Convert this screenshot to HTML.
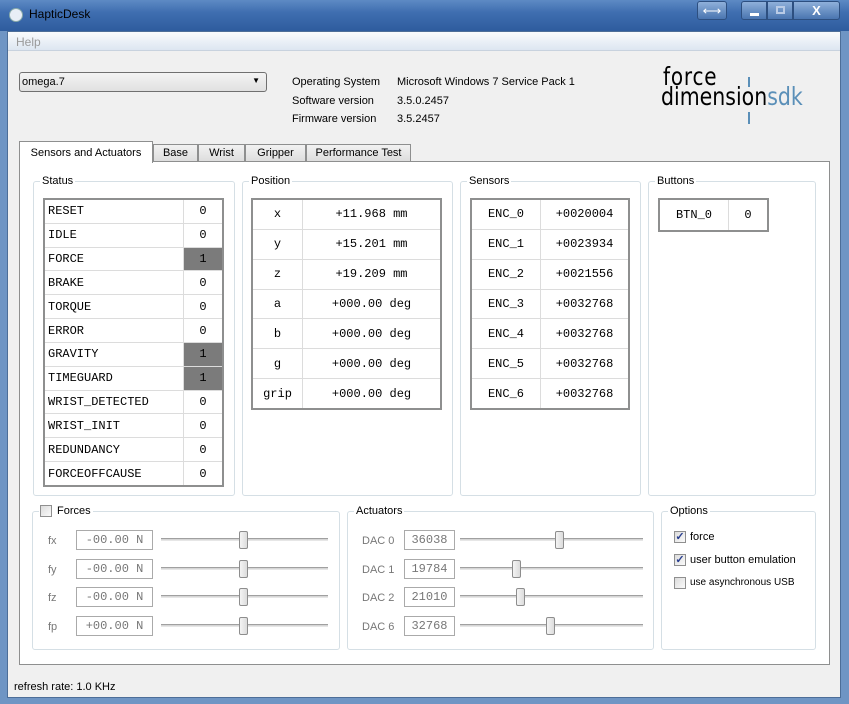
<!DOCTYPE html>
<html><head><meta charset="utf-8"><style>
*{box-sizing:border-box;margin:0;padding:0}
body{width:849px;height:704px;overflow:hidden;position:relative;background:#6f95c4;font-family:"Liberation Sans",sans-serif;font-size:11px;color:#000}
.a{position:absolute}
.title{left:0;top:0;width:849px;height:31px;background:linear-gradient(180deg,#5d8ac4 0%,#3f6eb0 40%,#2e5c9e 100%)}
.client{left:7px;top:31px;width:834px;height:667px;background:#f0f0f0;border:1px solid #4d6e98}
.menu{left:8px;top:32px;width:832px;height:19px;background:linear-gradient(#f9fbfd,#dde6f1);border-bottom:1px solid #c8d2de;color:#9a9a9a;font-size:12px;padding:3px 0 0 8px}
.gb{position:absolute;border:1px solid #d5dfe5;border-radius:3px}
.gt{position:absolute;top:-7px;left:6px;background:#fff;padding:0 2px;font-size:11px}
table{border-collapse:collapse;position:absolute;font-family:"Liberation Mono",monospace;font-size:12px;background:#fff;outline:2px solid #8e8f8f;outline-offset:-1px}
td{border:1px solid #dcdcdc;padding:0}
.ed{position:absolute;width:77px;height:20px;border:1px solid #aaa;background:#fff;font-family:"Liberation Mono",monospace;font-size:12px;color:#777;text-align:center;line-height:18px}
.sl{position:absolute;height:3px;border-top:1px solid #a0a0a0;border-bottom:1px solid #e6e6e6;background:#d6d6d6}
.th{position:absolute;width:9px;height:18px;border:1px solid #8d8d8d;border-radius:2px;background:linear-gradient(90deg,#f4f4f4,#dcdcdc)}
.lb{position:absolute;color:#777;font-size:11px}
.cb{position:absolute;width:12px;height:12px;border:1px solid #8f8f8f;background:linear-gradient(135deg,#dcdcdc,#fafafa)}
.ck{color:#2a3f8f;font-size:11px;line-height:10px;text-align:center;font-weight:bold}
.tab{position:absolute;top:144px;height:18px;border:1px solid #8e8f8f;border-bottom:none;background:linear-gradient(#f2f2f2,#dcdcdc);font-size:11px;text-align:center;line-height:17px}
</style></head><body>
<div class="a title"></div>
<div class="a" style="left:9px;top:8px;width:14px;height:14px;border-radius:50%;background:#e8eef6;border:1px solid #8aa"></div>
<div class="a" style="left:29px;top:7px;font-size:12px;color:#000">HapticDesk</div>
<div class="a" style="left:697px;top:1px;width:30px;height:19px;border:1px solid #2d4f80;border-radius:3px;background:linear-gradient(#8fb0da,#4a75b0);color:#fff;text-align:center;font-size:13px;line-height:17px">⟷</div>
<div class="a" style="left:741px;top:1px;width:26px;height:19px;border:1px solid #2d4f80;border-radius:3px 0 0 3px;background:linear-gradient(#8fb0da,#4a75b0)"><div class="a" style="left:8px;top:11px;width:9px;height:3px;background:#fff"></div></div>
<div class="a" style="left:767px;top:1px;width:26px;height:19px;border:1px solid #2d4f80;background:linear-gradient(#8fb0da,#4a75b0)"><div class="a" style="left:8px;top:4px;width:9px;height:8px;border:2px solid #b9cbe6"></div></div>
<div class="a" style="left:793px;top:1px;width:47px;height:19px;border:1px solid #2d4f80;border-radius:0 3px 3px 0;background:linear-gradient(#8fb0da,#4a75b0);color:#fff;text-align:center;font-weight:bold;font-size:13px;line-height:17px">X</div>
<div class="a client"></div>
<div class="a menu">Help</div>
<div class="a" style="left:19px;top:72px;width:248px;height:20px;border:1px solid #707070;border-radius:3px;background:linear-gradient(#f4f4f4,#e0e0e0);font-size:11px;padding:3px 0 0 2px">omega.7<span class="a" style="right:6px;top:3px;font-size:8px">▼</span></div>
<div class="a" style="left:292px;top:73px;font-size:11px;line-height:18.5px">Operating System<br>Software version<br>Firmware version</div>
<div class="a" style="left:397px;top:73px;font-size:11px;line-height:18.5px">Microsoft Windows 7 Service Pack 1<br>3.5.0.2457<br>3.5.2457</div>
<div class="a" style="left:663px;top:66px;font-size:25px;line-height:22px;font-family:'DejaVu Sans',sans-serif;letter-spacing:1px;transform:scaleX(.8);transform-origin:left">force</div>
<div class="a" style="left:661px;top:86px;font-size:25px;line-height:22px;font-family:'DejaVu Sans',sans-serif;letter-spacing:0;transform:scaleX(.82);transform-origin:left">dimension<span style="color:#5a8fb8">sdk</span></div>
<div class="a" style="left:748px;top:77px;width:2px;height:10px;background:#5a8fb8"></div>
<div class="a" style="left:748px;top:112px;width:2px;height:12px;background:#5a8fb8"></div>
<div class="tab" style="left:153px;width:45px">Base</div>
<div class="tab" style="left:198px;width:47px">Wrist</div>
<div class="tab" style="left:245px;width:61px">Gripper</div>
<div class="tab" style="left:306px;width:105px">Performance Test</div>
<div class="a" style="left:19px;top:161px;width:811px;height:504px;background:#fff;border:1px solid #8e8f8f"></div>
<div class="a" style="left:19px;top:141px;width:134px;height:22px;background:#fff;border:1px solid #8e8f8f;border-bottom:none;text-align:center;line-height:22px;font-size:11px">Sensors and Actuators</div>
<div class="gb" style="left:33px;top:181px;width:202px;height:315px"><span class="gt">Status</span></div>
<div class="gb" style="left:242px;top:181px;width:211px;height:315px"><span class="gt">Position</span></div>
<div class="gb" style="left:460px;top:181px;width:181px;height:315px"><span class="gt">Sensors</span></div>
<div class="gb" style="left:648px;top:181px;width:168px;height:315px"><span class="gt">Buttons</span></div>
<table style="left:44px;top:199px;width:179px;height:287px">
<tr><td style="width:139px;padding-left:3px">RESET</td><td style="text-align:center">0</td></tr>
<tr><td style="padding-left:3px">IDLE</td><td style="text-align:center">0</td></tr>
<tr><td style="padding-left:3px">FORCE</td><td style="text-align:center;background:#7b7b7b">1</td></tr>
<tr><td style="padding-left:3px">BRAKE</td><td style="text-align:center">0</td></tr>
<tr><td style="padding-left:3px">TORQUE</td><td style="text-align:center">0</td></tr>
<tr><td style="padding-left:3px">ERROR</td><td style="text-align:center">0</td></tr>
<tr><td style="padding-left:3px">GRAVITY</td><td style="text-align:center;background:#7b7b7b">1</td></tr>
<tr><td style="padding-left:3px">TIMEGUARD</td><td style="text-align:center;background:#7b7b7b">1</td></tr>
<tr><td style="padding-left:3px">WRIST_DETECTED</td><td style="text-align:center">0</td></tr>
<tr><td style="padding-left:3px">WRIST_INIT</td><td style="text-align:center">0</td></tr>
<tr><td style="padding-left:3px">REDUNDANCY</td><td style="text-align:center">0</td></tr>
<tr><td style="padding-left:3px">FORCEOFFCAUSE</td><td style="text-align:center">0</td></tr>
</table>
<table style="left:252px;top:199px;width:189px;height:210px;text-align:center">
<tr><td style="width:50px">x</td><td>+11.968 mm</td></tr>
<tr><td>y</td><td>+15.201 mm</td></tr>
<tr><td>z</td><td>+19.209 mm</td></tr>
<tr><td>a</td><td>+000.00 deg</td></tr>
<tr><td>b</td><td>+000.00 deg</td></tr>
<tr><td>g</td><td>+000.00 deg</td></tr>
<tr><td>grip</td><td>+000.00 deg</td></tr>
</table>
<table style="left:471px;top:199px;width:158px;height:210px;text-align:center">
<tr><td style="width:69px">ENC_0</td><td>+0020004</td></tr>
<tr><td>ENC_1</td><td>+0023934</td></tr>
<tr><td>ENC_2</td><td>+0021556</td></tr>
<tr><td>ENC_3</td><td>+0032768</td></tr>
<tr><td>ENC_4</td><td>+0032768</td></tr>
<tr><td>ENC_5</td><td>+0032768</td></tr>
<tr><td>ENC_6</td><td>+0032768</td></tr>
</table>
<table style="left:659px;top:199px;width:109px;height:32px;text-align:center">
<tr><td style="width:69px">BTN_0</td><td>0</td></tr>
</table>
<div class="gb" style="left:32px;top:511px;width:308px;height:139px"><span class="gt" style="padding-left:18px">Forces</span></div>
<div class="cb" style="left:40px;top:505px"></div>
<div class="gb" style="left:347px;top:511px;width:307px;height:139px"><span class="gt">Actuators</span></div>
<div class="gb" style="left:661px;top:511px;width:155px;height:139px"><span class="gt">Options</span></div>
<div class="lb" style="left:48px;top:535px">fx</div>
<div class="lb" style="left:48px;top:564px">fy</div>
<div class="lb" style="left:48px;top:592px">fz</div>
<div class="lb" style="left:48px;top:621px">fp</div>
<div class="ed" style="left:76px;top:530px">-00.00 N</div>
<div class="ed" style="left:76px;top:559px">-00.00 N</div>
<div class="ed" style="left:76px;top:587px">-00.00 N</div>
<div class="ed" style="left:76px;top:616px">+00.00 N</div>
<div class="sl" style="left:161px;top:538px;width:167px"></div>
<div class="sl" style="left:161px;top:567px;width:167px"></div>
<div class="sl" style="left:161px;top:595px;width:167px"></div>
<div class="sl" style="left:161px;top:624px;width:167px"></div>
<div class="th" style="left:239px;top:531px"></div>
<div class="th" style="left:239px;top:560px"></div>
<div class="th" style="left:239px;top:588px"></div>
<div class="th" style="left:239px;top:617px"></div>
<div class="lb" style="left:362px;top:535px">DAC 0</div>
<div class="lb" style="left:362px;top:564px">DAC 1</div>
<div class="lb" style="left:362px;top:592px">DAC 2</div>
<div class="lb" style="left:362px;top:621px">DAC 6</div>
<div class="ed" style="left:404px;top:530px;width:51px">36038</div>
<div class="ed" style="left:404px;top:559px;width:51px">19784</div>
<div class="ed" style="left:404px;top:587px;width:51px">21010</div>
<div class="ed" style="left:404px;top:616px;width:51px">32768</div>
<div class="sl" style="left:460px;top:538px;width:183px"></div>
<div class="sl" style="left:460px;top:567px;width:183px"></div>
<div class="sl" style="left:460px;top:595px;width:183px"></div>
<div class="sl" style="left:460px;top:624px;width:183px"></div>
<div class="th" style="left:555px;top:531px"></div>
<div class="th" style="left:512px;top:560px"></div>
<div class="th" style="left:516px;top:588px"></div>
<div class="th" style="left:546px;top:617px"></div>
<div class="cb ck" style="left:674px;top:531px">✓</div>
<div class="cb ck" style="left:674px;top:554px">✓</div>
<div class="cb" style="left:674px;top:577px"></div>
<div class="a" style="left:690px;top:531px;font-size:11px">force</div>
<div class="a" style="left:690px;top:554px;font-size:11px">user button emulation</div>
<div class="a" style="left:690px;top:577px;font-size:10px">use asynchronous USB</div>
<div class="a" style="left:14px;top:681px;font-size:11px">refresh rate: 1.0 KHz</div>
</body></html>
